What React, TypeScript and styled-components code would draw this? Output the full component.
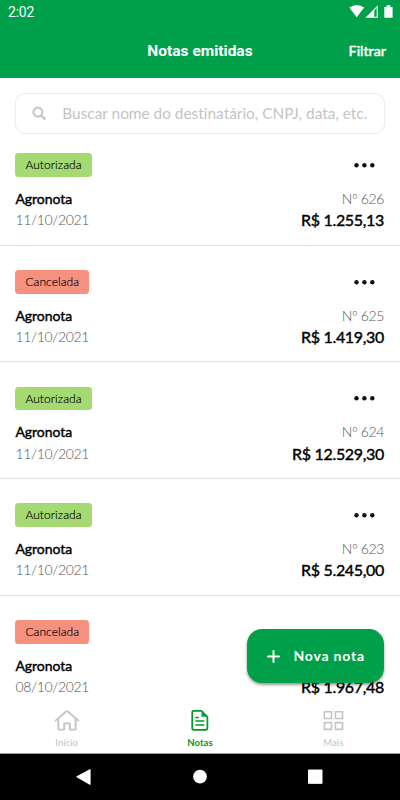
import React from 'react';
import styled, { createGlobalStyle } from 'styled-components';

const GREEN = '#009f49';

const GlobalStyle = createGlobalStyle`
  * { box-sizing: border-box; }
  body {
    margin: 0;
    background: #fff;
    font-family: Lato, sans-serif;
    font-variant-ligatures: none;
  }
`;

const Screen = styled.div`
  position: relative;
  display: flex;
  flex-direction: column;
  width: 400px;
  height: 800px;
  overflow: hidden;
  background: #fff;
`;

const Header = styled.header`
  flex: none;
  height: 77.6px;
  background: ${GREEN};
  color: #fff;
`;

const StatusBar = styled.div`
  display: flex;
  align-items: center;
  justify-content: space-between;
  height: 24px;
  padding: 0 7px 0 8px;
  font: 400 14px/24px Roboto, sans-serif;
  letter-spacing: -0.2px;
`;

const TitleBar = styled.div`
  display: grid;
  grid-template-columns: 1fr auto 1fr;
  align-items: center;
  height: 53px;
  padding: 0 14px;
`;

const Title = styled.h1`
  grid-column: 2;
  margin: 0;
  font: 700 15.5px/20px Roboto, sans-serif;
`;

const FilterButton = styled.button`
  justify-self: end;
  padding: 0;
  border: 0;
  background: none;
  color: #fff;
  font: 400 14.3px/20px Lato, sans-serif;
  -webkit-text-stroke: 0.5px #fff;
`;

const SearchBox = styled.div`
  display: flex;
  flex: none;
  align-items: center;
  gap: 16px;
  height: 41px;
  margin: 15.4px 15.3px 0;
  padding: 0 16px;
  border: 1px solid #ebebeb;
  border-radius: 10px;
  color: #c4c4c4;
  font-size: 15.4px;
  white-space: nowrap;
`;

const List = styled.main`
  flex: 1;
  min-height: 0;
  overflow: hidden;
`;

const Note = styled.article`
  display: flex;
  flex-direction: column;
  padding: 24.3px 16px 14.27px 15.4px;
  border-bottom: 1px solid #e0e0e0;
  &:first-child { padding-top: 19.4px; }
`;

const NoteTop = styled.div`
  display: flex;
  justify-content: space-between;
  height: 23.5px;
  margin-bottom: 11.1px;
`;

const NoteLine = styled.div<{ $height: number }>`
  display: flex;
  align-items: center;
  justify-content: space-between;
  height: ${(p) => p.$height}px;
  line-height: 21px;
  white-space: nowrap;
`;

const Badge = styled.span<{ $cancelled: boolean }>`
  padding: 0 10px;
  border-radius: 3.5px;
  background: ${(p) => (p.$cancelled ? '#f7917f' : '#a5d972')};
  color: #000;
  font-size: 12px;
  font-weight: 300;
  line-height: 24px;
  letter-spacing: 0.06px;
  -webkit-text-stroke: 0.15px #000;
`;

const MoreButton = styled.button`
  display: flex;
  align-items: center;
  padding: 0;
  margin-right: 9px;
  border: 0;
  background: none;
`;

const Muted = styled.span`
  color: #555;
  font-size: 14px;
  font-weight: 300;
  letter-spacing: -0.36px;
`;

const Strong = styled.span<{ $size: number; $spacing: number }>`
  color: #000;
  font-size: ${(p) => p.$size}px;
  letter-spacing: ${(p) => p.$spacing}px;
  -webkit-text-stroke: 0.4px #000;
`;

const NewNote = styled.button`
  position: absolute;
  right: 15.6px;
  bottom: 117px;
  display: flex;
  align-items: center;
  gap: 13px;
  width: 137.6px;
  height: 54px;
  padding: 0 0 0 20.6px;
  border: 0;
  border-radius: 15px;
  background: ${GREEN};
  box-shadow: 0 2px 3px rgba(0, 0, 0, 0.4);
  color: #fff;
  font: 700 14px/20px Lato, sans-serif;
  letter-spacing: 0.8px;
  white-space: nowrap;
`;

const Tabs = styled.nav`
  display: grid;
  flex: none;
  grid-template-columns: repeat(3, 1fr);
  height: 54px;
  border-bottom: 1px solid #999;
  background: #fff;
`;

const Tab = styled.div<{ $active?: boolean }>`
  display: flex;
  flex-direction: column;
  align-items: center;
  padding-top: 8px;
  color: ${(p) => (p.$active ? '#009a22' : '#c4c4c4')};
  font-size: 9.6px;
  font-weight: ${(p) => (p.$active ? 700 : 400)};
  line-height: 12px;
  svg { margin-bottom: 4px; }
`;

const SystemBar = styled.footer`
  flex: none;
  height: 46px;
  background: #000;
  svg { display: block; }
`;

const notes = [
  { status: 'Autorizada', date: '11/10/2021', number: 626, total: '1.255,13' },
  { status: 'Cancelada', date: '11/10/2021', number: 625, total: '1.419,30' },
  { status: 'Autorizada', date: '11/10/2021', number: 624, total: '12.529,30' },
  { status: 'Autorizada', date: '11/10/2021', number: 623, total: '5.245,00' },
  { status: 'Cancelada', date: '08/10/2021', total: '1.967,48' },
];

const StatusIcons = () => (
  <svg width="44" height="14" viewBox="349 5 44 14" fill="#fff">
    <path d="M349.3 7.6 Q356.7 2.6 364.2 7.6 L356.7 17.3Z" />
    <path fillRule="evenodd" d="M365.3 17.8 L377.8 5.3 V17.8Z M374.3 10.5 V16.8 H376.7 V8.1Z" />
    <path d="M384.3 7 H386.5 V5.3 H390.3 V7 H392.6 V17.8 H384.3Z" />
  </svg>
);

const SearchIcon = () => (
  <svg width="14" height="14" viewBox="0 0 14 14" fill="none" stroke="#c8c8c8">
    <circle cx="5.9" cy="6.1" r="4.5" strokeWidth="2.1" />
    <path d="M9.2 9.4 L13.2 13.3" strokeWidth="2.7" />
  </svg>
);

const DotsIcon = () => (
  <svg width="21" height="6" viewBox="0 0 21 6" fill="#111">
    <circle cx="2.5" cy="3.2" r="2.2" />
    <circle cx="10.4" cy="3.2" r="2.2" />
    <circle cx="18.3" cy="3.2" r="2.2" />
  </svg>
);

const PlusIcon = () => (
  <svg width="13" height="13" viewBox="0 0 13 13" stroke="#fff" strokeWidth="2" strokeLinecap="round">
    <path d="M6.5 1 V12 M1 6.5 H12" />
  </svg>
);

const HomeIcon = () => (
  <svg width="26" height="25" viewBox="0 0 26 25" fill="none" stroke="#c4c4c4" strokeWidth="1.9" strokeLinecap="round" strokeLinejoin="round">
    <path d="M1.6 12.6 L12.2 3.5 Q13 2.9 13.8 3.5 L24.4 12.6" />
    <path d="M4.4 11 V21.6 H10.2 V15.4 H15.8 V21.6 H21.6 V11" />
  </svg>
);

const NoteIcon = () => (
  <svg width="18" height="25" viewBox="0 0 18 25" fill="none" stroke="#009a22" strokeWidth="1.7" strokeLinejoin="round">
    <path d="M2.8 2.9 H10.5 L16.4 8.8 V20 Q16.4 21.8 14.6 21.8 H2.8 Q1.2 21.8 1.2 20 V4.7 Q1.2 2.9 2.8 2.9Z" />
    <path d="M10.5 2.9 V8.8 H16.4Z" fill="#009f49" stroke="none" />
    <path d="M4.4 9.4 H7.8 M4.4 13.1 H13.4 M4.4 17 H13.4" strokeWidth="1.5" />
  </svg>
);

const GridIcon = () => (
  <svg width="21" height="25" viewBox="0 0 21 25" fill="none" stroke="#c4c4c4" strokeWidth="1.6">
    <path d="M1.4 3.7 H8.5 V10.5 H1.4Z M12.4 3.7 H19.5 V10.5 H12.4Z M1.4 14.6 H8.5 V21.4 H1.4Z M12.4 14.6 H19.5 V21.4 H12.4Z" />
  </svg>
);

const NavigationIcons = () => (
  <svg width="400" height="46" viewBox="0 0 400 46" fill="#fff" stroke="#fff" strokeLinejoin="round">
    <path d="M77 22.7 L90 15.7 V30.2Z" strokeWidth="1.2" />
    <circle cx="200" cy="22.7" r="6.9" stroke="none" />
    <path d="M308.5 16 H322 V29.3 H308.5Z" />
  </svg>
);

export default function App() {
  return (
    <Screen>
      <GlobalStyle />
      <Header>
        <StatusBar><span>2:02</span><StatusIcons /></StatusBar>
        <TitleBar>
          <Title>Notas emitidas</Title>
          <FilterButton>Filtrar</FilterButton>
        </TitleBar>
      </Header>
      <SearchBox><SearchIcon /><span>Buscar nome do destinatário, CNPJ, data, etc.</span></SearchBox>
      <List>
        {notes.map((note) => (
          <Note key={note.total}>
            <NoteTop>
              <Badge $cancelled={note.status === 'Cancelada'}>{note.status}</Badge>
              <MoreButton aria-label="Mais opções"><DotsIcon /></MoreButton>
            </NoteTop>
            <NoteLine $height={21}>
              <Strong $size={14} $spacing={-0.05}>Agronota</Strong>
              {note.number && <Muted>Nº {note.number}</Muted>}
            </NoteLine>
            <NoteLine $height={21.5}>
              <Muted>{note.date}</Muted>
              <Strong $size={16} $spacing={-0.32}>R$ {note.total}</Strong>
            </NoteLine>
          </Note>
        ))}
      </List>
      <Tabs>
        <Tab><HomeIcon />Início</Tab>
        <Tab $active><NoteIcon />Notas</Tab>
        <Tab><GridIcon />Mais</Tab>
      </Tabs>
      <SystemBar><NavigationIcons /></SystemBar>
      <NewNote><PlusIcon />Nova nota</NewNote>
    </Screen>
  );
}
